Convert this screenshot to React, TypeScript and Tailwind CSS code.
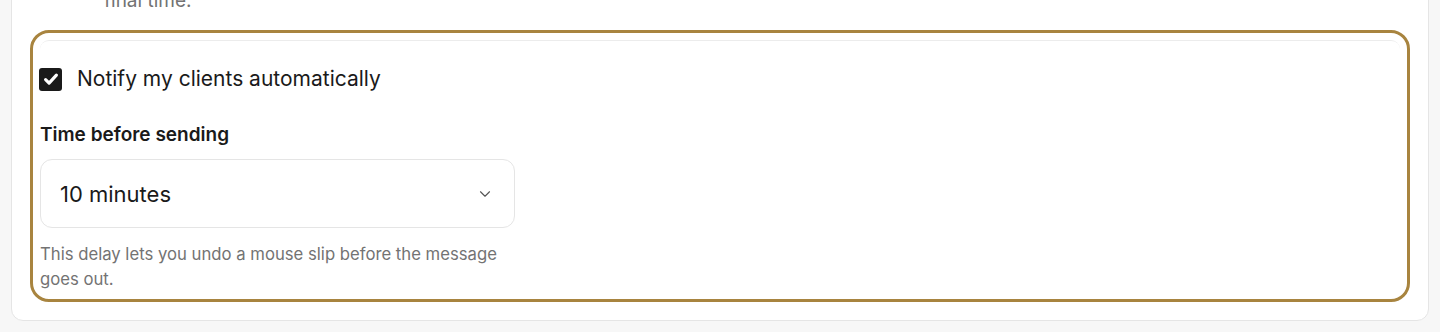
import { ChevronDown } from "lucide-react"

export default function App() {
  return (
    <div className="min-h-[332px] overflow-hidden bg-[#f7f7f7] font-['Inter','Noto_Sans',sans-serif] text-[#1a1a1a]">
      {/* card, top is scrolled above the viewport */}
      <div className="mx-[11px] -mt-[14px] rounded-b-xl border border-[#e5e5e5] bg-white px-[28px] pb-[28px]">
        <p className="pl-[64px] text-[19px] leading-[28px] text-[#737373]">final time.</p>

        {/* highlighted settings block */}
        <div className="mt-[25px] rounded-[9px] border-t border-[#ececec] pt-[26px] outline-[3.5px] outline-offset-[7px] outline-[#a8843f]">
          <label className="-ml-px flex items-center gap-[15px]">
            <span className="flex h-[23px] w-[23px] items-center justify-center rounded-[3px] bg-[#1a1a1a]">
              <svg viewBox="0 0 16 16" className="h-[18px] w-[18px]" fill="none">
                <path d="M3.2 8.6l3.1 3.1L12.8 4.6" stroke="white" strokeWidth="2.8" strokeLinecap="round" strokeLinejoin="round" />
              </svg>
            </span>
            <span className="text-[21px] leading-[24px]">Notify my clients automatically</span>
          </label>

          <div className="mt-[32px] text-[19px] font-semibold leading-[24px]">Time before sending</div>

          <div className="mt-[12px] flex h-[69px] w-[475px] items-center justify-between rounded-xl border border-[#e5e5e5] bg-white pl-[19px] pr-[20px]">
            <span className="text-[22px] leading-[28px]">10 minutes</span>
            <ChevronDown className="h-[18px] w-[18px] text-[#555]" strokeWidth={1.5} />
          </div>

          <p className="mt-[14px] w-[475px] text-[16.7px] leading-[25px] text-[#737373]">
            This delay lets you undo a mouse slip before the message goes out.
          </p>
        </div>
      </div>
    </div>
  )
}
